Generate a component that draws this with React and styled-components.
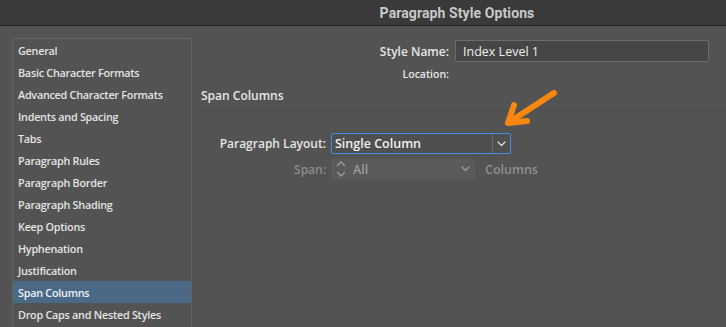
import React from "react";
import styled, { createGlobalStyle } from "styled-components";

const Global = createGlobalStyle`
  html, body { margin: 0; padding: 0; background: #535353; }
  body { font-family: "Open Sans", "Noto Sans", sans-serif; }
  * { box-sizing: border-box; }
`;

const Window = styled.div`
  position: relative;
  width: 726px;
  height: 327px;
  background: #535353;
  overflow: hidden;
  display: flex;
  flex-direction: column;
`;

const TitleBar = styled.div`
  height: 26px;
  flex: none;
  background: #3a3a3a;
  border-bottom: 1px solid #262626;
  display: flex;
  align-items: center;
  justify-content: center;
  padding-left: 188px;
  padding-top: 1px;
  font-family: Roboto, "Liberation Sans", sans-serif;
  font-weight: 700;
  font-size: 14px;
  color: #c9c9c9;
  letter-spacing: 0.1px;
`;

const Body = styled.div`
  flex: 1;
  display: flex;
  padding: 13px 0 0 12px;
  min-height: 0;
`;

const Sidebar = styled.ul`
  list-style: none;
  margin: -1px 0 0 0;
  padding: 0;
  width: 180px;
  flex: none;
  border: 1px solid #626262;
  border-bottom: none;
  height: 320px;
`;

const Item = styled.li`
  height: 22px;
  display: flex;
  align-items: center;
  padding-left: 5px;
  font-size: 10.8px;
  font-weight: 600;
  letter-spacing: -0.25px;
  color: ${(p) => (p.$active ? "#eef2f6" : "#e4e4e4")};
  background: ${(p) => (p.$active ? "#4b6986" : "transparent")};
  white-space: nowrap;
`;

const Main = styled.div`
  flex: 1;
  display: flex;
  flex-direction: column;
  padding-left: 8px;
  padding-top: 1px;
`;

const HeaderRow = styled.div`
  display: flex;
  align-items: center;
  height: ${(p) => p.$h || 22}px;
  margin-top: ${(p) => p.$mt || 0}px;
`;

const HeadLabel = styled.div`
  width: 255px;
  text-align: right;
  padding-right: 6px;
  font-size: ${(p) => (p.$small ? "10.5px" : "12px")};
  font-weight: 600;
  color: #e6e6e6;
  flex: none;
`;

const NameInput = styled.div`
  width: 254px;
  height: 22px;
  background: #464646;
  border: 1px solid #6c6c6c;
  border-radius: 2px;
  display: flex;
  align-items: center;
  padding-left: 7px;
  font-size: 12.5px;
  color: #ededed;
`;

const SectionTitle = styled.div`
  height: 26px;
  display: flex;
  align-items: center;
  padding-left: 1px;
  padding-bottom: 4px;
  font-size: 12px;
  font-weight: 600;
  color: #e6e6e6;
  border-bottom: 1px solid #4a4a4a;
`;

const FormRow = styled.div`
  display: flex;
  align-items: center;
  height: ${(p) => p.$h}px;
  margin-top: ${(p) => p.$mt}px;
`;

const FieldLabel = styled.div`
  width: 131px;
  flex: none;
  text-align: right;
  padding-right: 5px;
  font-size: 12px;
  font-weight: 600;
  color: ${(p) => (p.$dim ? "#8c8c8c" : "#e6e6e6")};
`;

const Select = styled.div`
  width: 180px;
  height: 21px;
  border: 1px solid #3f8fe6;
  border-radius: 2px;
  background: #4f4f4f;
  display: flex;
  align-items: stretch;
`;

const SelectText = styled.div`
  flex: 1;
  display: flex;
  align-items: center;
  padding-left: 3px;
  font-size: 12.5px;
  font-weight: 600;
  color: #f0f0f0;
`;

const SelectBtn = styled.div`
  width: 18px;
  border-left: 1px solid #6a6a6a;
  display: flex;
  align-items: center;
  justify-content: center;
`;

const Stepper = styled.div`
  width: 144px;
  height: 22px;
  border-radius: 3px;
  background: #5a5a5a;
  display: flex;
  align-items: center;
  padding-left: 5px;
  padding-right: 5px;
  gap: 7px;
`;

const StepVal = styled.div`
  flex: 1;
  font-size: 12.5px;
  font-weight: 600;
  color: #9b9b9b;
`;

const Unit = styled.div`
  margin-left: 10px;
  font-size: 12.5px;
  font-weight: 600;
  color: #8f8f8f;
`;

const Arrow = styled.svg`
  position: absolute;
  left: 500px;
  top: 85px;
`;

const Chevron = ({ color }) => (
  <svg width="9" height="6" viewBox="0 0 9 6">
    <path d="M1 1 L4.5 4.5 L8 1" fill="none" stroke={color} strokeWidth="1.3" strokeLinecap="round" strokeLinejoin="round" />
  </svg>
);

const items = [
  "General",
  "Basic Character Formats",
  "Advanced Character Formats",
  "Indents and Spacing",
  "Tabs",
  "Paragraph Rules",
  "Paragraph Border",
  "Paragraph Shading",
  "Keep Options",
  "Hyphenation",
  "Justification",
  "Span Columns",
  "Drop Caps and Nested Styles",
];

export default function App() {
  return (
    <Window>
      <Global />
      <TitleBar>Paragraph Style Options</TitleBar>
      <Body>
        <Sidebar>
          {items.map((t) => (
            <Item key={t} $active={t === "Span Columns"}>{t}</Item>
          ))}
        </Sidebar>
        <Main>
          <HeaderRow $h={22}>
            <HeadLabel>Style Name:</HeadLabel>
            <NameInput>Index Level 1</NameInput>
          </HeaderRow>
          <HeaderRow $h={22} $mt={1}>
            <HeadLabel $small>Location:</HeadLabel>
          </HeaderRow>
          <SectionTitle>Span Columns</SectionTitle>
          <FormRow $h={21} $mt={22}>
            <FieldLabel>Paragraph Layout:</FieldLabel>
            <Select>
              <SelectText>Single Column</SelectText>
              <SelectBtn><Chevron color="#dcdcdc" /></SelectBtn>
            </Select>
          </FormRow>
          <FormRow $h={22} $mt={4}>
            <FieldLabel $dim>Span:</FieldLabel>
            <Stepper>
              <svg width="10" height="18" viewBox="0 0 10 18">
                <path d="M1.5 5.5 L5 2 L8.5 5.5" fill="none" stroke="#a0a0a0" strokeWidth="1.2" strokeLinecap="round" strokeLinejoin="round" />
                <path d="M1.5 12.5 L5 16 L8.5 12.5" fill="none" stroke="#a0a0a0" strokeWidth="1.2" strokeLinecap="round" strokeLinejoin="round" />
              </svg>
              <StepVal>All</StepVal>
              <Chevron color="#9a9a9a" />
            </Stepper>
            <Unit>Columns</Unit>
          </FormRow>
        </Main>
      </Body>
      <Arrow width="64" height="46" viewBox="0 0 64 46">
        <path d="M54 8 L14 34" fill="none" stroke="#f7870f" strokeWidth="6" strokeLinecap="round" />
        <path d="M8 38 L14 20 M8 38 L27 36" fill="none" stroke="#f7870f" strokeWidth="6" strokeLinecap="round" strokeLinejoin="round" />
      </Arrow>
    </Window>
  );
}
